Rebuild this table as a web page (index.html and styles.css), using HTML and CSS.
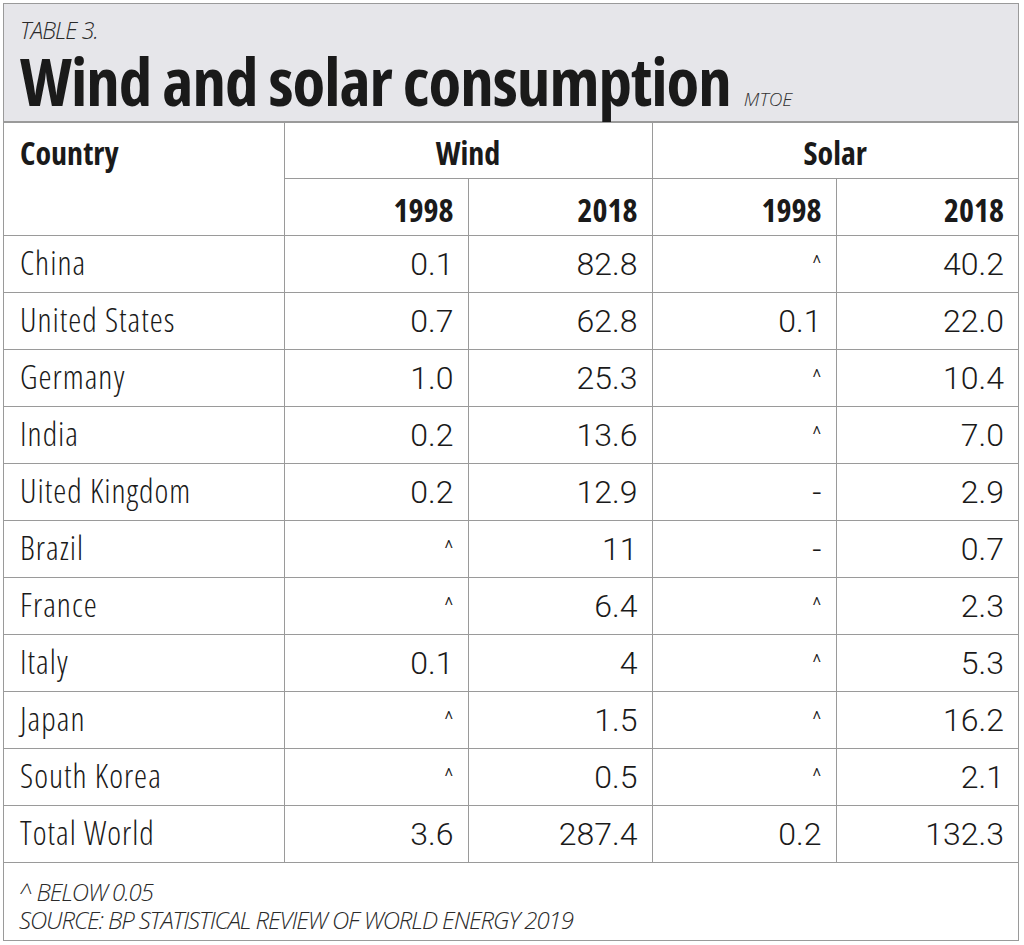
FILE: index.html
```html
<!DOCTYPE html>
<html>
<head>
<meta charset="utf-8">
<link rel="stylesheet" href="styles.css">
</head>
<body>
<div class="card">
  <div class="title-box">
    <div class="kicker">TABLE 3.</div>
    <h1 class="title">Wind and solar consumption <span class="unit">MTOE</span></h1>
  </div>
  <table class="data">
    <colgroup>
      <col class="c-country"><col class="c-num"><col class="c-num"><col class="c-num"><col class="c-last">
    </colgroup>
    <thead>
      <tr class="head1">
        <th class="country" rowspan="2">Country</th>
        <th colspan="2">Wind</th>
        <th colspan="2">Solar</th>
      </tr>
      <tr class="head2">
        <th>1998</th><th>2018</th><th>1998</th><th>2018</th>
      </tr>
    </thead>
    <tbody>
      <tr><td class="country">China</td><td>0.1</td><td>82.8</td><td class="sym">^</td><td>40.2</td></tr>
      <tr><td class="country">United States</td><td>0.7</td><td>62.8</td><td>0.1</td><td>22.0</td></tr>
      <tr><td class="country">Germany</td><td>1.0</td><td>25.3</td><td class="sym">^</td><td>10.4</td></tr>
      <tr><td class="country">India</td><td>0.2</td><td>13.6</td><td class="sym">^</td><td>7.0</td></tr>
      <tr><td class="country">Uited Kingdom</td><td>0.2</td><td>12.9</td><td>-</td><td>2.9</td></tr>
      <tr><td class="country">Brazil</td><td class="sym">^</td><td>11</td><td>-</td><td>0.7</td></tr>
      <tr><td class="country">France</td><td class="sym">^</td><td>6.4</td><td class="sym">^</td><td>2.3</td></tr>
      <tr><td class="country">Italy</td><td>0.1</td><td>4</td><td class="sym">^</td><td>5.3</td></tr>
      <tr><td class="country">Japan</td><td class="sym">^</td><td>1.5</td><td class="sym">^</td><td>16.2</td></tr>
      <tr><td class="country">South Korea</td><td class="sym">^</td><td>0.5</td><td class="sym">^</td><td>2.1</td></tr>
      <tr><td class="country">Total World</td><td>3.6</td><td>287.4</td><td>0.2</td><td>132.3</td></tr>
    </tbody>
  </table>
  <div class="notes">
    <div>^ BELOW 0.05</div>
    <div>SOURCE: BP STATISTICAL REVIEW OF WORLD ENERGY 2019</div>
  </div>
</div>
</body>
</html>
```
FILE: styles.css
```css
html, body {
  margin: 0;
  padding: 0;
  background: #ffffff;
}
body {
  font-family: "Open Sans", "Roboto", "Liberation Sans", sans-serif;
  font-stretch: 75%;
  color: #1e1e1e;
}
.card {
  margin: 3px 0 0 3px;
  width: 1014px;
  border: 1px solid #9a9a9a;
}
.title-box {
  background: #e6e6ea;
  height: 118px;
  border-bottom: 1px solid #9a9a9a;
  box-sizing: border-box;
  padding: 12px 0 0 16px;
}
.kicker {
  font-style: italic;
  font-weight: 300;
  font-stretch: 100%;
  font-size: 23px;
  line-height: 28px;
  color: #2a2a2a;
  letter-spacing: -0.9px;
}
.title {
  margin: 0;
  font-size: 67px;
  line-height: 72px;
  font-weight: bold;
  letter-spacing: -1px;
  color: #1a1a1a;
  white-space: nowrap;
}
.unit {
  font-size: 19px;
  font-weight: 300;
  font-style: italic;
  font-stretch: 100%;
  letter-spacing: 0;
  color: #333;
  margin-left: 2px;
}
.data {
  width: 100%;
  border-collapse: collapse;
  table-layout: fixed;
}
.c-country { width: 280px; }
.c-num { width: 184px; }
.c-last { width: auto; }
.data th, .data td {
  border: 1px solid #9a9a9a;
  height: 57px;
  padding: 12px 14px 0 16px;
  text-align: right;
  font-size: 32px;
  line-height: 32px;
  box-sizing: border-box;
  vertical-align: top;
}
.data td {
  font-family: "Roboto", "Open Sans", sans-serif;
  font-weight: 300;
  font-stretch: 100%;
  color: #1a1a1a;
  padding-top: 12px;
}
.data td.country {
  font-family: "Open Sans", "Roboto", sans-serif;
  font-stretch: 75%;
  font-weight: 300;
  font-size: 33px;
  letter-spacing: 1px;
  padding-top: 11px;
}
.data th {
  font-weight: bold;
  color: #1a1a1a;
}
.data .head1 th {
  height: 56px;
  padding-top: 14px;
}
.data .head2 th {
  padding-top: 15px;
}
.data .head1 th[colspan] {
  text-align: center;
  padding-left: 0;
  padding-right: 0;
}
.data th.country, .data td.country {
  text-align: left;
}
.data tr > :first-child { border-left: none; }
.data tr > :last-child { border-right: none; }
.data td.sym {
  font-size: 22px;
}
.notes {
  height: 77px;
  box-sizing: border-box;
  padding: 15px 0 0 15px;
  font-style: italic;
  font-weight: 300;
  font-stretch: 100%;
  font-size: 24px;
  line-height: 28px;
  color: #2a2a2a;
  letter-spacing: -1.1px;
}
```
